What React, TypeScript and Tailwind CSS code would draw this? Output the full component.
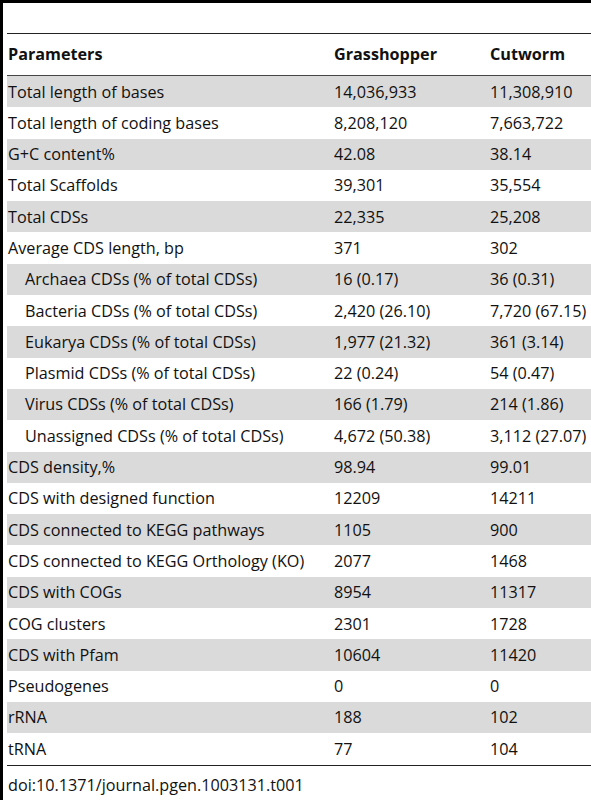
import React from "react";

type Row = { label: string; g: string; c: string; indent?: boolean };

const rows: Row[] = [
  { label: "Total length of bases", g: "14,036,933", c: "11,308,910" },
  { label: "Total length of coding bases", g: "8,208,120", c: "7,663,722" },
  { label: "G+C content%", g: "42.08", c: "38.14" },
  { label: "Total Scaffolds", g: "39,301", c: "35,554" },
  { label: "Total CDSs", g: "22,335", c: "25,208" },
  { label: "Average CDS length, bp", g: "371", c: "302" },
  { label: "Archaea CDSs (% of total CDSs)", g: "16 (0.17)", c: "36 (0.31)", indent: true },
  { label: "Bacteria CDSs (% of total CDSs)", g: "2,420 (26.10)", c: "7,720 (67.15)", indent: true },
  { label: "Eukarya CDSs (% of total CDSs)", g: "1,977 (21.32)", c: "361 (3.14)", indent: true },
  { label: "Plasmid CDSs (% of total CDSs)", g: "22 (0.24)", c: "54 (0.47)", indent: true },
  { label: "Virus CDSs (% of total CDSs)", g: "166 (1.79)", c: "214 (1.86)", indent: true },
  { label: "Unassigned CDSs (% of total CDSs)", g: "4,672 (50.38)", c: "3,112 (27.07)", indent: true },
  { label: "CDS density,%", g: "98.94", c: "99.01" },
  { label: "CDS with designed function", g: "12209", c: "14211" },
  { label: "CDS connected to KEGG pathways", g: "1105", c: "900" },
  { label: "CDS connected to KEGG Orthology (KO)", g: "2077", c: "1468" },
  { label: "CDS with COGs", g: "8954", c: "11317" },
  { label: "COG clusters", g: "2301", c: "1728" },
  { label: "CDS with Pfam", g: "10604", c: "11420" },
  { label: "Pseudogenes", g: "0", c: "0" },
  { label: "rRNA", g: "188", c: "102" },
  { label: "tRNA", g: "77", c: "104" },
];

export default function App() {
  return (
    <div
      className="w-[591px] h-[800px] bg-white border-l-[3px] border-black overflow-hidden text-[#111] text-[16.2px]"
      style={{ fontFamily: '"Open Sans", "Noto Sans", sans-serif' }}
    >
      <div className="h-[3px] bg-black" />
      <div className="pl-[4px] pt-[30px]">
        <div className="border-t-[1.5px] border-[#222]" />
        <div className="flex items-center h-[42px] font-bold border-b-[1.5px] border-[#444]">
          <div className="w-[319px] pl-[1px]">Parameters</div>
          <div className="w-[156px] pl-[8px]">Grasshopper</div>
          <div className="flex-1 pl-[8px]">Cutworm</div>
        </div>
        {rows.map((r, i) => (
          <div
            key={r.label}
            className={`flex items-center h-[31.3px] whitespace-nowrap ${i % 2 === 0 ? "bg-[#dadada]" : "bg-white"}`}
          >
            <div className={`w-[319px] ${r.indent ? "pl-[18px]" : "pl-[1px]"}`}>{r.label}</div>
            <div className="w-[156px] pl-[8px]">{r.g}</div>
            <div className="flex-1 pl-[8px]">{r.c}</div>
          </div>
        ))}
        <div className="border-t-[1.5px] border-[#222]" />
        <div className="pl-[1px] pt-[7px]">doi:10.1371/journal.pgen.1003131.t001</div>
      </div>
    </div>
  );
}
